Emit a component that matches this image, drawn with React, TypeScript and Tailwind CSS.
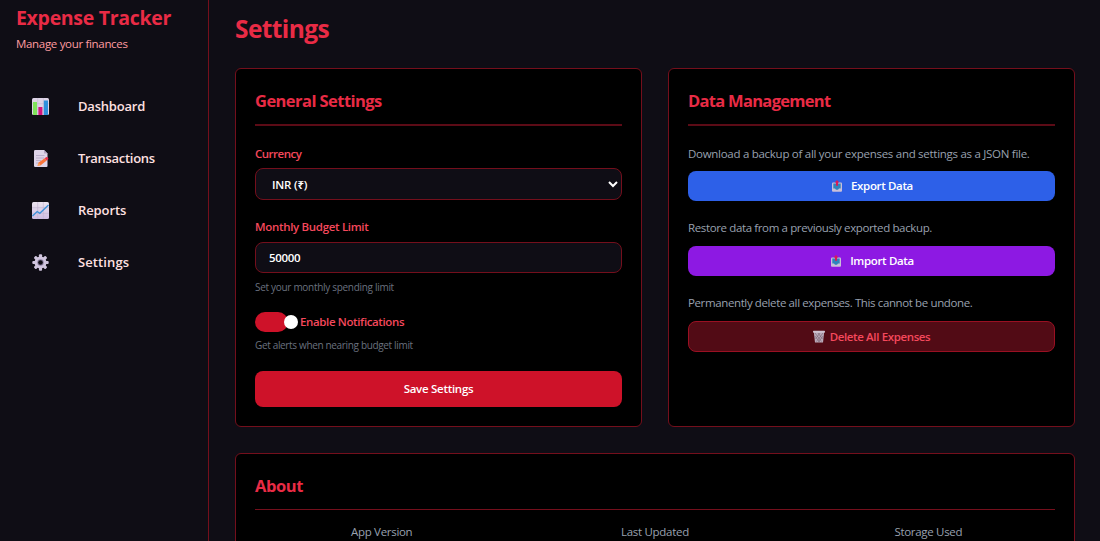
import React from 'react'

const ChartIcon = () => (
  <svg width="17" height="17" viewBox="0 0 17 17">
    <rect width="17" height="17" rx="1.5" fill="#ddd3e6" />
    <path d="M0 5.7h17M0 11.3h17M5.7 0v17M11.3 0v17" stroke="#c5b9d3" strokeWidth=".6" />
    <rect x="1" y="4" width="4" height="13" fill="#7fe25a" />
    <rect x="6.4" y="9" width="4" height="8" fill="#d3147b" />
    <rect x="11.8" y="2.5" width="4.2" height="14.5" fill="#2e90dd" />
  </svg>
)

const MemoIcon = () => (
  <svg width="17" height="17" viewBox="0 0 17 17">
    <path d="M2 1.2Q2 0 3.2 0H12l3.5 3.5V16q0 1-1 1H3.2Q2 17 2 16z" fill="#ded4e8" />
    <path d="M12 0v3.5h3.5z" fill="#b3a6c4" />
    <path d="M4 5.5h8.5M4 8h8M4 10.5h5M4 13h3" stroke="#b3a6c4" strokeWidth=".8" />
    <path d="M5.5 15.8l1.2-3.3 6-4.3 2 2.4-6 4.6z" fill="#f9743a" />
    <path d="M12.7 8.2l1.3-1q1.2-.5 2 .5t0 1.7l-1.3 1.2z" fill="#e9304d" />
    <path d="M5.5 15.8l1.2-3.3 2 2.7z" fill="#f8a25c" />
  </svg>
)

const TrendIcon = () => (
  <svg width="17" height="17" viewBox="0 0 17 17">
    <defs>
      <linearGradient id="trend" x1="0" y1="0" x2="0" y2="1">
        <stop offset="0" stopColor="#ebe3ef" />
        <stop offset="1" stopColor="#cdbbe0" />
      </linearGradient>
    </defs>
    <rect width="17" height="17" rx="1.5" fill="url(#trend)" />
    <path d="M0 5.7h17M0 11.3h17M5.7 0v17M11.3 0v17" stroke="#bfb0d0" strokeWidth=".6" />
    <path d="M.5 14l4.7-4.5 2.6 1.8L16.5 3" fill="none" stroke="#3b8fd6" strokeWidth="1.3" />
  </svg>
)

const GearIcon = () => (
  <svg width="17" height="17" viewBox="-8.5 -8.5 17 17">
    <g fill="#d0c5de">
      <rect x="-1.6" y="-8.2" width="3.2" height="16.4" rx="1" />
      <rect x="-1.6" y="-8.2" width="3.2" height="16.4" rx="1" transform="rotate(45)" />
      <rect x="-1.6" y="-8.2" width="3.2" height="16.4" rx="1" transform="rotate(90)" />
      <rect x="-1.6" y="-8.2" width="3.2" height="16.4" rx="1" transform="rotate(135)" />
      <circle r="6" />
    </g>
    <circle r="3.2" fill="#8e82a3" />
    <circle r="2.3" fill="#0f0d15" />
  </svg>
)

const TrayIcon = () => (
  <svg width="10" height="12" viewBox="0 0 10 12">
    <rect y="2.5" width="10" height="9.2" rx="1" fill="#c9bfd8" />
    <path d="M1.3 3.5h7.4v5H7L6 9.7H4L3 8.5H1.3z" fill="#2f83bd" />
    <path d="M5 0l2.3 2.6H6v3.2H4V2.6H2.7z" fill="#d81b55" />
  </svg>
)

const TrashIcon = () => (
  <svg width="12" height="13" viewBox="0 0 12 13">
    <path d="M.8 2h10.4l-1.2 10.5H2z" fill="#b9a9b8" />
    <path d="M2 3l6.5 8.5M5 3l4.5 6M1.8 6l5 6M10 3l-6.5 8.5M7 3L2.5 9M10.2 6l-5 6" stroke="#75606f" strokeWidth=".6" />
    <rect y=".7" width="12" height="2" rx=".7" fill="#cfc2cf" />
  </svg>
)

const links = [
  { name: 'Dashboard', icon: <ChartIcon />, style: 'tracking-[-0.2px]' },
  { name: 'Transactions', icon: <MemoIcon />, style: 'tracking-[-0.3px]' },
  { name: 'Reports', icon: <TrendIcon />, style: 'tracking-[-0.1px]' },
  { name: 'Settings', icon: <GearIcon />, style: 'tracking-[0.1px]' },
]

const Sidebar = () => {
  return (
    <aside className="w-[209px] shrink-0 border-r border-[#740f1c] pl-4 pt-[6px]">
      <h1 className="text-[19.5px] leading-6 font-bold tracking-[-0.3px] text-[#e92b45]">Expense Tracker</h1>
      <p className="mt-[6px] text-[11.5px] leading-4 tracking-[-0.32px] text-[#ff9ca0]">Manage your finances</p>
      <nav className="mt-7">
        <ul>
          {links.map((link) => (
            <li key={link.name} className="flex h-[52px] items-center pl-4">
              <a href="#" className="flex items-center gap-[29px] text-[13px] leading-5 font-semibold text-[#ffe0e1]">
                {link.icon}
                <span className={link.style}>{link.name}</span>
              </a>
            </li>
          ))}
        </ul>
      </nav>
    </aside>
  )
}

const General = () => {
  return (
    <section className="h-[359px] rounded-md border border-[#740f1c] bg-black px-[19px] pt-5">
      <h2 className="h-[37px] border-b-2 border-[#5c0b16] text-[16.5px] leading-6 font-bold tracking-[-0.56px] text-[#e92b45]">General Settings</h2>
      <label className="mt-[19px] block text-[11.5px] leading-[18px] font-semibold tracking-[-0.5px] text-[#f5485c]">Currency</label>
      <select className="mt-[5px] block h-8 w-full rounded-lg border border-[#740f1c] bg-[#0f0d15] pl-3 text-[11.5px] font-semibold tracking-[-0.2px] text-white">
        <option>INR (₹)</option>
      </select>
      <label className="mt-[18px] block text-[11.5px] leading-[18px] font-semibold tracking-[-0.32px] text-[#f5485c]">Monthly Budget Limit</label>
      <input defaultValue="50000" className="mt-[6px] block h-[31px] w-full rounded-lg border border-[#740f1c] bg-[#0f0d15] px-[13px] text-[11.5px] font-semibold tracking-[-0.35px] text-white" />
      <p className="mt-[6px] text-[10px] leading-4 tracking-[-0.3px] text-[#6a717f]">Set your monthly spending limit</p>
      <div className="mt-[17px] flex h-5 items-center">
        <span className="flex h-5 w-[33px] items-center rounded-full bg-[#ce1229] pl-[29px]">
          <span className="h-[14px] w-[14px] shrink-0 rounded-full bg-white"></span>
        </span>
        <span className="ml-[12px] text-[11.5px] font-semibold tracking-[-0.37px] text-[#f5485c]">Enable Notifications</span>
      </div>
      <p className="mt-[5px] text-[10px] leading-4 tracking-[-0.34px] text-[#6a717f]">Get alerts when nearing budget limit</p>
      <button className="mt-[18px] block h-9 w-full rounded-lg bg-[#ce1229] text-[11.5px] font-semibold tracking-[-0.28px] text-white">Save Settings</button>
    </section>
  )
}

const Data = () => {
  return (
    <section className="h-[359px] rounded-md border border-[#740f1c] bg-black px-[19px] pt-5">
      <h2 className="h-[37px] border-b-2 border-[#5c0b16] text-[16.5px] leading-6 font-bold tracking-[-0.7px] text-[#e92b45]">Data Management</h2>
      <p className="mt-[19px] text-[11.5px] leading-[18px] tracking-[-0.28px] text-[#99a1af]">Download a backup of all your expenses and settings as a JSON file.</p>
      <button className="mt-2 flex h-[30px] w-full items-center justify-center gap-[9px] rounded-lg bg-[#2d60e8] pl-[2px] text-[11.5px] font-semibold tracking-[-0.35px] text-white">
        <TrayIcon />
        Export Data
      </button>
      <p className="mt-[18px] text-[11.5px] leading-[18px] tracking-[-0.37px] text-[#99a1af]">Restore data from a previously exported backup.</p>
      <button className="mt-[9px] flex h-[30px] w-full items-center justify-center gap-[9px] rounded-lg bg-[#8d19e3] pl-[2px] text-[11.5px] font-semibold tracking-[-0.35px] text-white">
        <TrayIcon />
        Import Data
      </button>
      <p className="mt-[18px] text-[11.5px] leading-[18px] tracking-[-0.38px] text-[#99a1af]">Permanently delete all expenses. This cannot be undone.</p>
      <button className="mt-[9px] flex h-[31px] w-full items-center justify-center gap-[5px] rounded-lg border border-[#9a1022] bg-[#520b15] text-[11.5px] font-semibold tracking-[-0.37px] text-[#f5485c]">
        <TrashIcon />
        Delete All Expenses
      </button>
    </section>
  )
}

const About = () => {
  return (
    <section className="mt-[26px] h-[130px] rounded-md border border-[#740f1c] bg-black px-[19px] pt-5">
      <h2 className="h-9 border-b border-[#740f1c] text-[16.5px] leading-6 font-bold tracking-[-0.4px] text-[#e92b45]">About</h2>
      <div className="mt-[13px] grid grid-cols-3 gap-5 text-center text-[11.5px] leading-[18px] tracking-[-0.3px] text-[#99a1af]">
        <p>App Version</p>
        <p>Last Updated</p>
        <p>Storage Used</p>
      </div>
    </section>
  )
}

const App = () => {
  return (
    <div className="flex h-[541px] overflow-hidden bg-[#0f0d15] font-['Open_Sans','Noto_Sans',sans-serif]">
      <Sidebar />
      <main className="flex-1 pl-[26px] pr-[25px] pt-[13px]">
        <h1 className="h-[55px] text-[24.5px] leading-8 font-bold tracking-[-0.6px] text-[#e92b45]">Settings</h1>
        <div className="grid grid-cols-2 gap-[26px]">
          <General />
          <Data />
        </div>
        <About />
      </main>
    </div>
  )
}

export default App
